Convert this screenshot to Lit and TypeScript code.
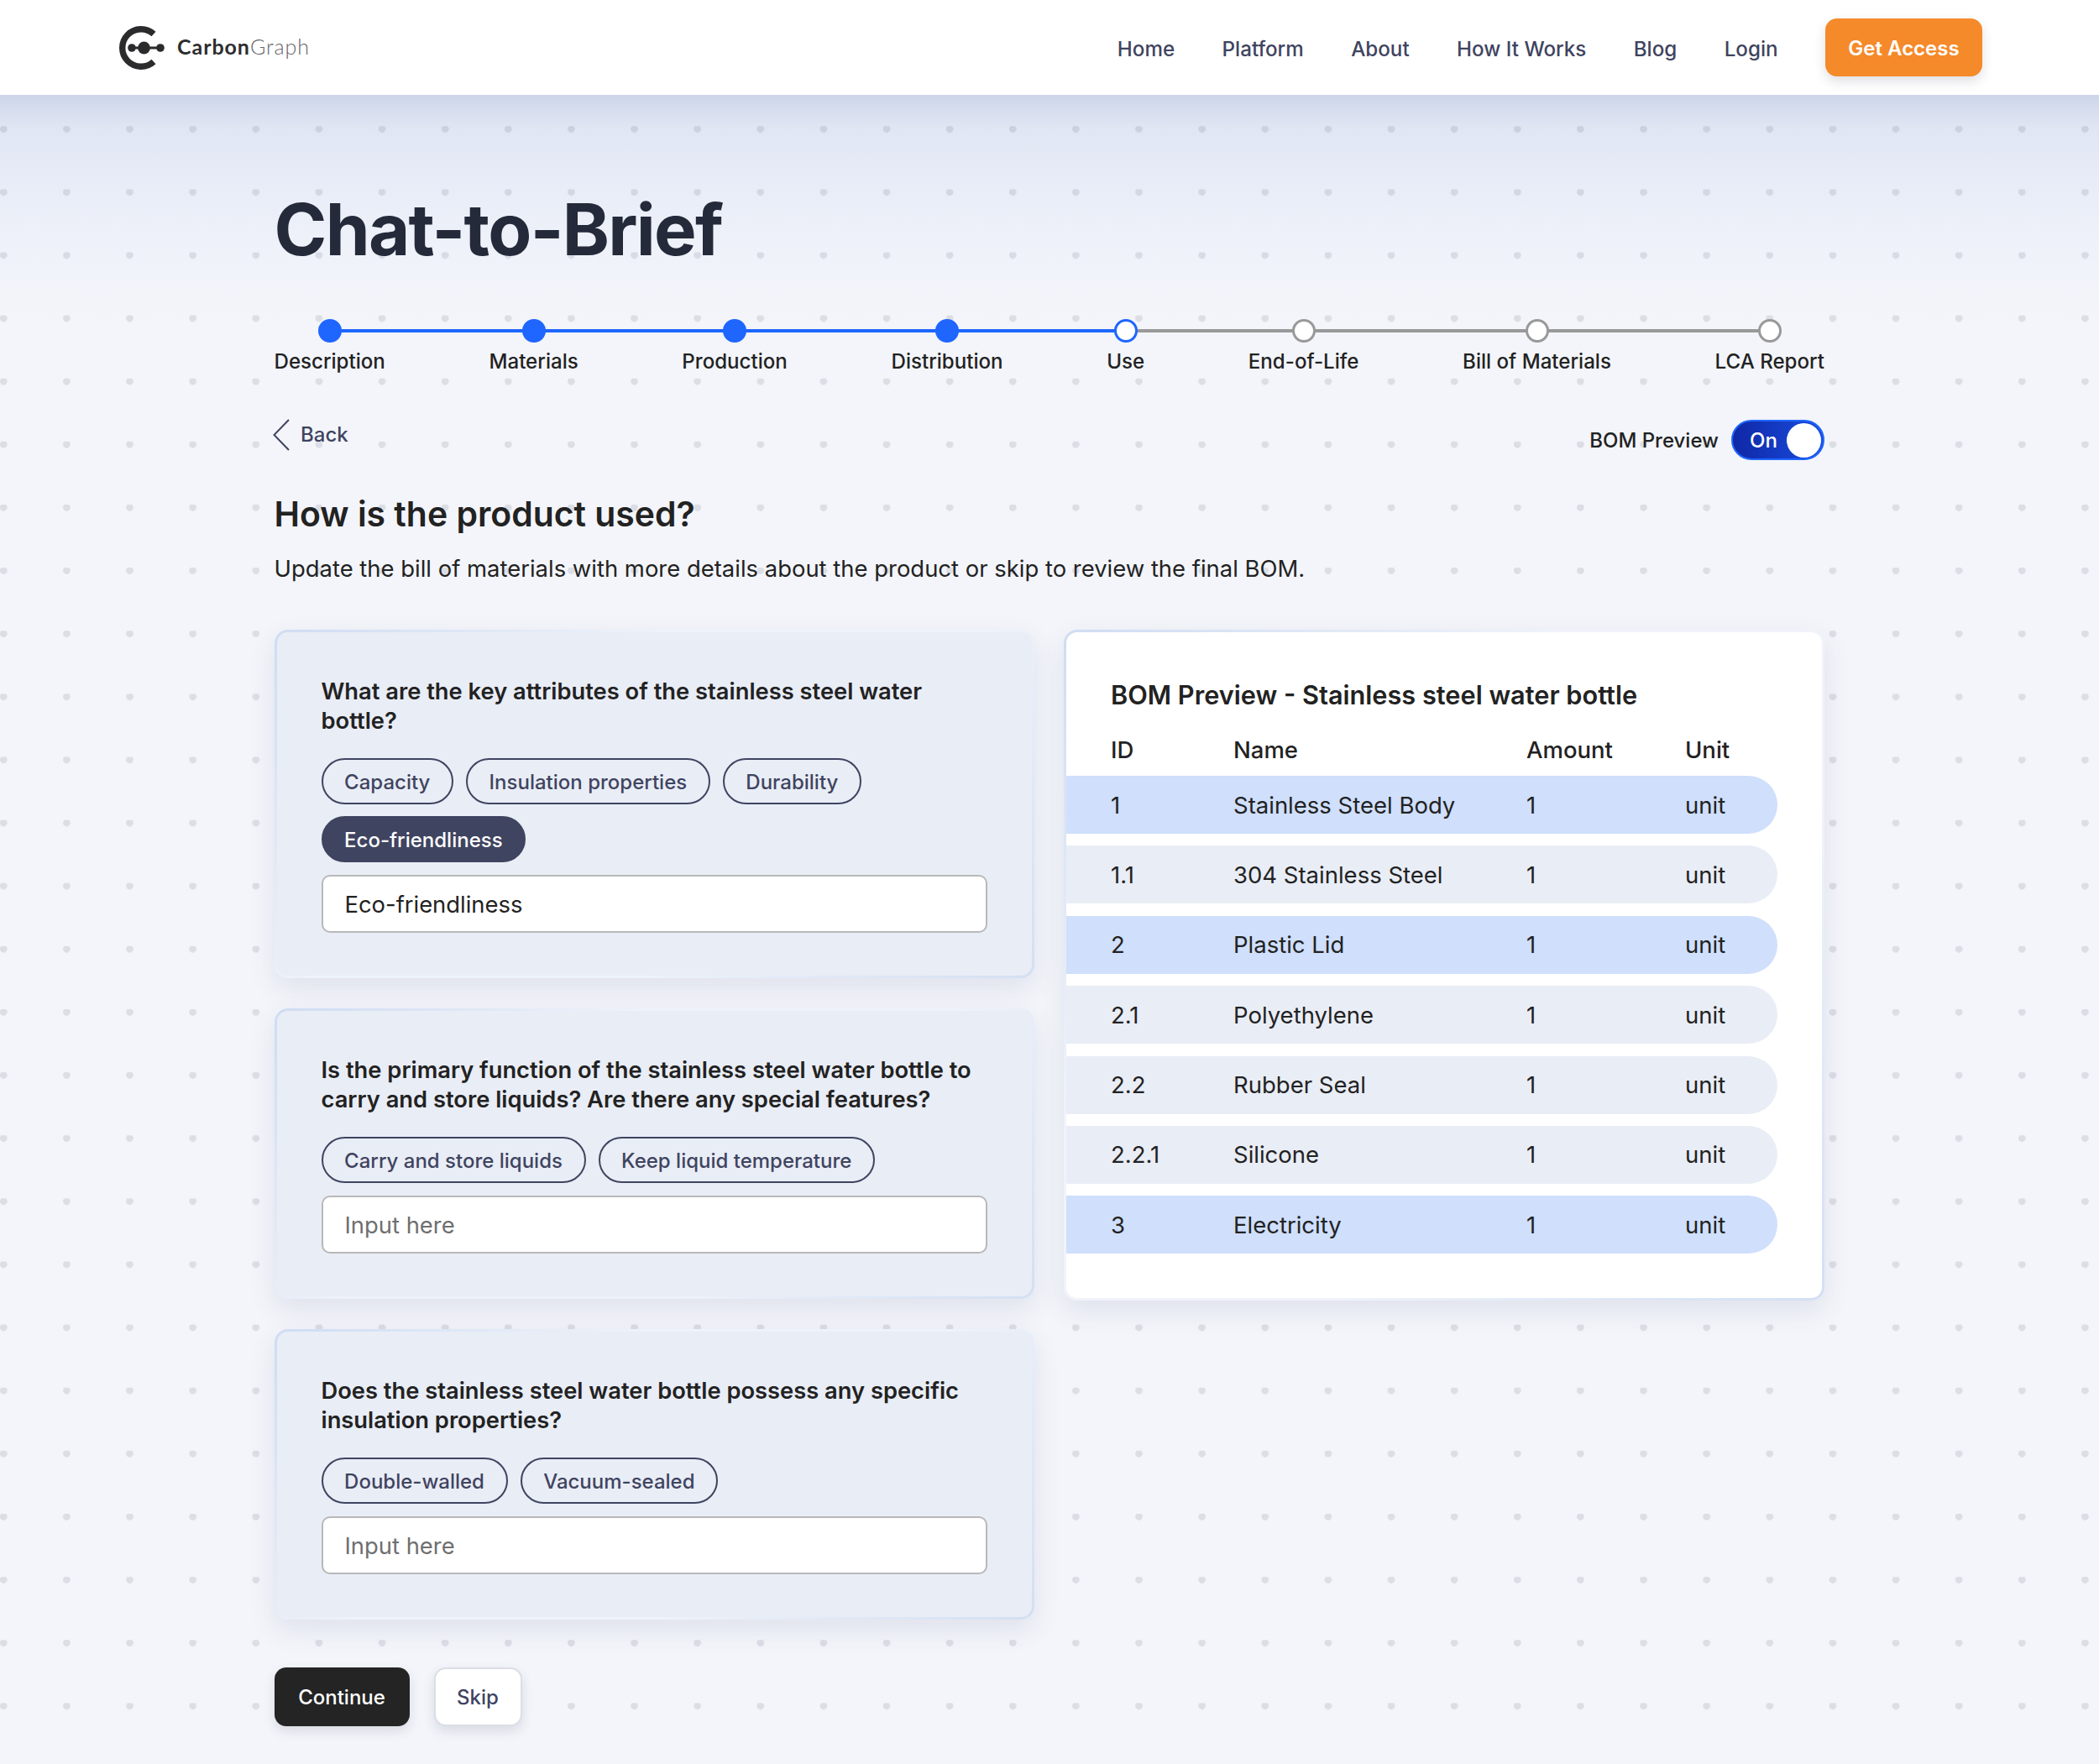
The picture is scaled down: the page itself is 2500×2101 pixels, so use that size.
import { LitElement, html, css } from "lit";
import { customElement } from "lit/decorators.js";

const steps = [
  { label: "Description", state: "done", next: 242 },
  { label: "Materials", state: "done", next: 239 },
  { label: "Production", state: "done", next: 254 },
  { label: "Distribution", state: "done", next: 214 },
  { label: "Use", state: "current", next: 210 },
  { label: "End-of-Life", state: "todo", next: 277 },
  { label: "Bill of Materials", state: "todo", next: 278 },
  { label: "LCA Report", state: "todo", next: 0 },
];

const questions = [
  {
    text: "What are the key attributes of the stainless steel water bottle?",
    chips: ["Capacity", "Insulation properties", "Durability", "Eco-friendliness"],
    active: "Eco-friendliness",
    value: "Eco-friendliness",
  },
  {
    text: "Is the primary function of the stainless steel water bottle to carry and store liquids? Are there any special features?",
    chips: ["Carry and store liquids", "Keep liquid temperature"],
    active: "",
    value: "",
  },
  {
    text: "Does the stainless steel water bottle possess any specific insulation properties?",
    chips: ["Double-walled", "Vacuum-sealed"],
    active: "",
    value: "",
  },
];

const rows = [
  ["1", "Stainless Steel Body", "1", "unit", true],
  ["1.1", "304 Stainless Steel", "1", "unit", false],
  ["2", "Plastic Lid", "1", "unit", true],
  ["2.1", "Polyethylene", "1", "unit", false],
  ["2.2", "Rubber Seal", "1", "unit", false],
  ["2.2.1", "Silicone", "1", "unit", false],
  ["3", "Electricity", "1", "unit", true],
];

@customElement("app-root")
export class AppRoot extends LitElement {
  static styles = css`
    :host {
      display: block;
      min-height: 2101px;
      font-family: Inter, "Liberation Sans", sans-serif;
      color: #222222;
      background-color: #f3f5fa;
      background-image:
        radial-gradient(circle at 4.3px 3.4px, rgba(60, 65, 90, 0.13) 4px, transparent 4.6px),
        linear-gradient(180deg, #cdd6ea 113px, #e1e6f4 153px, #e9edf8 228px, #eff2f9 300px, #f3f5fa 385px);
      background-size: 75.14px 75.14px, 100% 100%;
    }
    * { box-sizing: border-box; }
    .nav {
      height: 113px;
      background: #ffffff;
      display: flex;
      align-items: center;
      justify-content: space-between;
      padding: 0 139px;
    }
    .logo { display: flex; align-items: center; gap: 15px; }
    .logo svg { display: block; }
    .logo-text { font-family: Lato, sans-serif; font-size: 25px; letter-spacing: 0.95px; color: #2d2d2f; margin-top: -4px; font-weight: 700; }
    .logo-text span { color: #666669; font-weight: 300; }
    .links { display: flex; align-items: center; gap: 56.4px; }
    .links a { font-size: 24.2px; font-weight: 500; color: #3f4460; margin-top: 3px; }
    .cta {
      height: 69px;
      width: 187px;
      border-radius: 14px;
      background: #f58a2a;
      color: #fff;
      font-size: 24px;
      font-weight: 600;
      padding-top: 2px;
      display: flex;
      align-items: center;
      justify-content: center;
      box-shadow: 0 6px 14px rgba(60, 65, 90, 0.16);
    }
    main { padding: 0 327px 0 326.5px; }
    h1 {
      margin: 0;
      padding-top: 112px;
      font-size: 85px;
      line-height: 98px;
      letter-spacing: -1.7px;
      font-weight: 700;
      color: #252a3b;
    }
    .stepper { display: flex; justify-content: space-between; margin-top: 57px; }
    .step { position: relative; display: flex; flex-direction: column; align-items: center; }
    .dot {
      width: 28px;
      height: 28px;
      border-radius: 50%;
      position: relative;
      z-index: 1;
      background: #fff;
      border: 3.5px solid #999999;
    }
    .step.done .dot { background: #1f66ff; border-color: #1f66ff; }
    .step.current .dot { border-color: #1f66ff; }
    .line {
      position: absolute;
      top: 12px;
      left: 50%;
      height: 4px;
      background: #999999;
    }
    .step.done .line { background: #1f66ff; }
    .step-label { margin-top: 4px; font-size: 24.1px; line-height: 38px; font-weight: 500; color: #222; white-space: nowrap; }
    .toolbar { display: flex; justify-content: space-between; margin-top: 48px; height: 70px; }
    .back { display: flex; align-items: center; gap: 13px; height: 37px; font-size: 24px; font-weight: 500; color: #3f4460; margin-top: 1px; }
    .back svg { margin-left: -1.5px; }
    .toggle-wrap { display: flex; align-items: center; gap: 15px; height: 48px; margin-top: 2px; font-size: 24px; font-weight: 500; color: #222; }
    .toggle {
      width: 111px;
      height: 48px;
      border-radius: 24px;
      border: 2px solid #1f66ff;
      background: linear-gradient(90deg, #0f27a6, #1a4ee0);
      display: flex;
      align-items: center;
      justify-content: space-between;
      padding: 0 2px 0 20px;
      color: #fff;
    }
    .knob { width: 41px; height: 41px; border-radius: 50%; background: #fff; }
    h2 { margin: 19px 0 0; font-size: 40.9px; line-height: 50px; font-weight: 600; color: #222; }
    .lead { margin: 19px 0 0; font-size: 27.45px; line-height: 42px; color: #222; }
    .grid { display: grid; grid-template-columns: 905.5px 906px; column-gap: 35px; margin-top: 52px; align-items: start; }
    .col { display: flex; flex-direction: column; gap: 36px; }
    .card {
      border-radius: 16px;
      border: 3px solid transparent;
      box-shadow: 0 12px 32px rgba(60, 75, 120, 0.11);
    }
    .q {
      padding: 53px 53px 51px;
      background:
        linear-gradient(#e9edf6, #e9edf6) padding-box,
        linear-gradient(135deg, #cfdcf3 0%, #eef2fa 35%, #eef2fa 65%, #d3dff3 100%) border-box;
    }
    .q p { margin: 0; font-size: 27.3px; line-height: 35px; font-weight: 560; color: #222; }
    .chips { display: flex; flex-wrap: wrap; gap: 14px 15px; margin-top: 27px; }
    .chip {
      height: 55px;
      padding: 2px 25.6px 0;
      border: 2px solid #3f4460;
      border-radius: 28px;
      display: flex;
      align-items: center;
      font-size: 24px;
      font-weight: 500;
      color: #3f4460;
    }
    .chip.on { background: #3f4460; color: #fff; }
    .input {
      margin-top: 15px;
      height: 69px;
      background: #fff;
      border: 2px solid #b8b8b8;
      border-radius: 10px;
      padding: 1px 26px 0;
      display: flex;
      align-items: center;
      font-size: 27.4px;
      color: #222;
    }
    .input.ph { color: #6f6f6f; }
    .bom {
      padding: 37px 0 53px;
      background:
        linear-gradient(#fff, #fff) padding-box,
        linear-gradient(135deg, #cfdcf3 0%, #f0f3fa 35%, #f0f3fa 65%, #d3dff3 100%) border-box;
    }
    .bom h3 { margin: 16px 0 0 53px; font-size: 30.7px; line-height: 44px; font-weight: 600; color: #222; }
    .t-row { display: grid; grid-template-columns: 146px 349px 189px 1fr; padding-left: 53px; align-items: center; font-size: 27.5px; }
    .t-head { height: 44px; margin-top: 21px; font-weight: 500; margin-bottom: 0; }
    .t-body { display: flex; flex-direction: column; gap: 14.4px; margin-right: 53px; margin-top: 9px; }
    .t-body .t-row { height: 69px; background: #e9edf6; border-radius: 0 35px 35px 0; }
    .t-body .t-row.hl { background: #cfdffc; }
    .actions { display: flex; gap: 29px; margin-top: 57px; padding-bottom: 45px; }
    .btn { height: 70px; border-radius: 14px; display: flex; align-items: center; justify-content: center; font-size: 24px; font-weight: 500; box-shadow: 0 6px 14px rgba(60, 65, 90, 0.14); }
    .btn.primary { width: 161px; background: #242424; color: #fff; }
    .btn.ghost { width: 105px; background: #fff; color: #3f4460; border: 2px solid #dcdee6; }
  `;

  render() {
    return html`
      <header class="nav">
        <div class="logo">
          <svg width="57" height="52" viewBox="0 0 57 52" aria-hidden="true">
            <path d="M44 9.5 A22.3 22.3 0 1 0 44 42.5" fill="none" stroke="#2b2b2d" stroke-width="7.4" />
            <path d="M18 26 H52" stroke="#2b2b2d" stroke-width="3" />
            <circle cx="18" cy="26" r="4.8" fill="#2b2b2d" />
            <circle cx="32.5" cy="26" r="7.4" fill="#2b2b2d" />
            <circle cx="52" cy="26" r="4.8" fill="#2b2b2d" />
          </svg>
          <div class="logo-text">Carbon<span>Graph</span></div>
        </div>
        <nav class="links">
          <a>Home</a><a>Platform</a><a>About</a><a>How It Works</a><a>Blog</a><a>Login</a>
          <div class="cta">Get Access</div>
        </nav>
      </header>
      <main>
        <h1>Chat-to-Brief</h1>
        <div class="stepper">
          ${steps.map(
            (s) => html`<div class="step ${s.state}">
              <div class="dot"></div>
              ${s.next ? html`<div class="line" style="width:${s.next}px"></div>` : ""}
              <div class="step-label">${s.label}</div>
            </div>`
          )}
        </div>
        <div class="toolbar">
          <div class="back">
            <svg width="20" height="38" viewBox="0 0 20 38" aria-hidden="true">
              <path d="M19 1 L1.5 19 L19 37" fill="none" stroke="#3f4460" stroke-width="2" />
            </svg>
            Back
          </div>
          <div class="toggle-wrap">
            BOM Preview
            <div class="toggle"><span>On</span><div class="knob"></div></div>
          </div>
        </div>
        <h2>How is the product used?</h2>
        <p class="lead">Update the bill of materials with more details about the product or skip to review the final BOM.</p>
        <div class="grid">
          <div class="col">
            ${questions.map(
              (q) => html`<section class="card q">
                <p>${q.text}</p>
                <div class="chips">
                  ${q.chips.map((c) => html`<div class="chip ${c === q.active ? "on" : ""}">${c}</div>`)}
                </div>
                <div class="input ${q.value ? "" : "ph"}">${q.value || "Input here"}</div>
              </section>`
            )}
          </div>
          <section class="card bom">
            <h3>BOM Preview - Stainless steel water bottle</h3>
            <div class="t-row t-head"><span>ID</span><span>Name</span><span>Amount</span><span>Unit</span></div>
            <div class="t-body">
              ${rows.map(
                (r) => html`<div class="t-row ${r[4] ? "hl" : ""}"><span>${r[0]}</span><span>${r[1]}</span><span>${r[2]}</span><span>${r[3]}</span></div>`
              )}
            </div>
          </section>
        </div>
        <div class="actions">
          <div class="btn primary">Continue</div>
          <div class="btn ghost">Skip</div>
        </div>
      </main>
    `;
  }
}
